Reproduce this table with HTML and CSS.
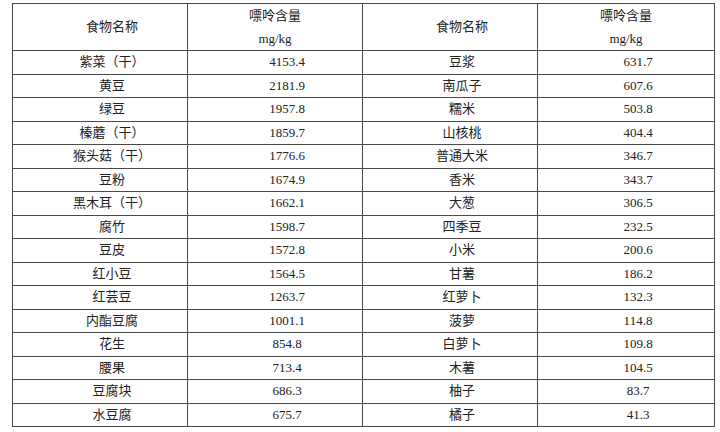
FILE: index.html
```html
<!DOCTYPE html>
<html lang="zh">
<head>
<meta charset="utf-8">
<title>食物嘌呤含量</title>
<link rel="stylesheet" href="styles.css">
</head>
<body>
<table class="purine">
  <colgroup>
    <col class="c1"><col class="c2"><col class="c3"><col class="c4">
  </colgroup>
  <thead>
    <tr class="head">
      <th class="name">食物名称</th>
      <th class="val">嘌呤含量<br>mg/kg</th>
      <th class="name">食物名称</th>
      <th class="val">嘌呤含量<br>mg/kg</th>
    </tr>
  </thead>
  <tbody>
    <tr><td>紫菜（干）</td><td>4153.4</td><td>豆浆</td><td>631.7</td></tr>
    <tr><td>黄豆</td><td>2181.9</td><td>南瓜子</td><td>607.6</td></tr>
    <tr><td>绿豆</td><td>1957.8</td><td>糯米</td><td>503.8</td></tr>
    <tr><td>榛蘑（干）</td><td>1859.7</td><td>山核桃</td><td>404.4</td></tr>
    <tr><td>猴头菇（干）</td><td>1776.6</td><td>普通大米</td><td>346.7</td></tr>
    <tr><td>豆粉</td><td>1674.9</td><td>香米</td><td>343.7</td></tr>
    <tr><td>黑木耳（干）</td><td>1662.1</td><td>大葱</td><td>306.5</td></tr>
    <tr><td>腐竹</td><td>1598.7</td><td>四季豆</td><td>232.5</td></tr>
    <tr><td>豆皮</td><td>1572.8</td><td>小米</td><td>200.6</td></tr>
    <tr><td>红小豆</td><td>1564.5</td><td>甘薯</td><td>186.2</td></tr>
    <tr><td>红芸豆</td><td>1263.7</td><td>红萝卜</td><td>132.3</td></tr>
    <tr><td>内酯豆腐</td><td>1001.1</td><td>菠萝</td><td>114.8</td></tr>
    <tr><td>花生</td><td>854.8</td><td>白萝卜</td><td>109.8</td></tr>
    <tr><td>腰果</td><td>713.4</td><td>木薯</td><td>104.5</td></tr>
    <tr><td>豆腐块</td><td>686.3</td><td>柚子</td><td>83.7</td></tr>
    <tr><td>水豆腐</td><td>675.7</td><td>橘子</td><td>41.3</td></tr>
  </tbody>
</table>
</body>
</html>
```

FILE: styles.css
```css
html, body {
  margin: 0;
  padding: 0;
  background: #ffffff;
}

body {
  padding: 3px 0 0 12px;
  font-family: "Liberation Serif", "Noto Sans CJK SC", serif;
  color: #222222;
}

.purine {
  border-collapse: collapse;
  table-layout: fixed;
  width: 702px;
  font-size: 13px;
}

.c1, .c2, .c3 { width: 175px; }
.c4 { width: 177px; }

.purine th,
.purine td {
  border: 1px solid #4a4a4a;
  padding: 0 0 0 24px;
  text-align: center;
  font-weight: normal;
  vertical-align: middle;
  line-height: 16px;
}

.purine tbody tr {
  height: 23.5px;
}

.purine .head {
  height: 46px;
}

.purine th.val {
  padding-left: 0;
  line-height: 23px;
}
```
